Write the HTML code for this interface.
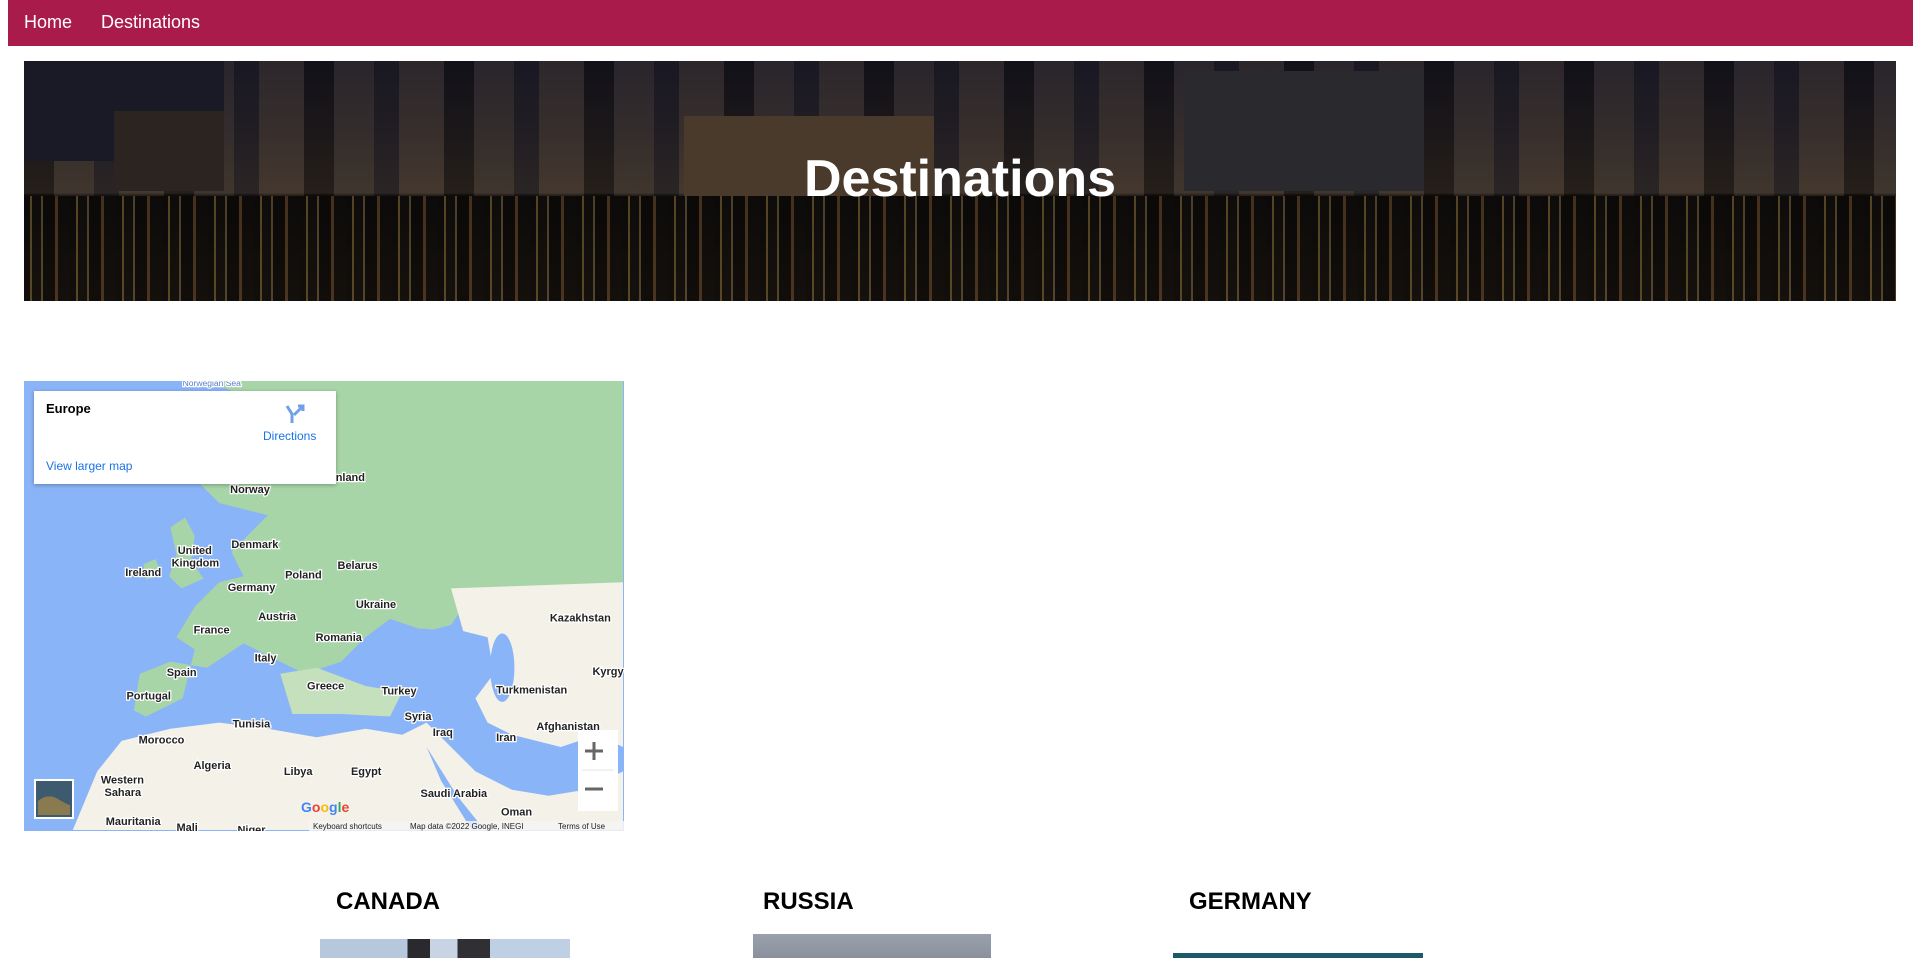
<!DOCTYPE html>
<html><head><meta charset="utf-8"><style>
*{margin:0;padding:0;box-sizing:border-box}
body{width:1913px;height:958px;overflow:hidden;background:#fff;font-family:"Liberation Sans",Arial,sans-serif;position:relative}
.nav{position:absolute;left:8px;top:0;width:1905px;height:46px;background:#a91b4b}
.nav a{position:absolute;top:12px;color:#fff;font-size:18px;text-decoration:none}
.banner{position:absolute;left:24px;top:61px;width:1872px;height:240px;overflow:hidden;
background:linear-gradient(#1c1a26 0%,#2a2426 30%,#3a3028 55%,#14110f 56%,#1e1812 100%)}
.sky{position:absolute;left:0;top:0;width:100%;height:135px;
background:repeating-linear-gradient(90deg,rgba(0,0,0,.35) 0 30px,rgba(80,70,60,.25) 30px 70px,rgba(20,20,30,.4) 70px 95px,rgba(110,90,70,.2) 95px 140px)}
.bld{position:absolute;background:rgba(0,0,0,.2)}
.water{position:absolute;left:0;top:135px;width:100%;height:105px;
background:repeating-linear-gradient(90deg,rgba(0,0,0,.4) 0 6px,rgba(200,160,70,.35) 6px 8px,rgba(0,0,0,.3) 8px 17px,rgba(240,200,120,.25) 17px 19px,rgba(0,0,0,.45) 19px 31px,rgba(180,120,60,.3) 31px 34px,rgba(0,0,0,.35) 34px 46px)}
.banner h1{position:absolute;left:0;width:100%;top:88px;text-align:center;color:#fff;font-size:52px;font-weight:bold}
.map{position:absolute;left:24px;top:381px;width:600px;height:450px;overflow:hidden;background:#8ab4f8}
.map svg{position:absolute;left:0;top:0}
.lbl{font-family:"Liberation Sans",sans-serif;font-size:9px;font-weight:bold;fill:#222;stroke:#fff;stroke-width:2px;paint-order:stroke}
.card{position:absolute;left:10px;top:10px;width:302px;height:93px;background:#fff;box-shadow:0 1px 4px rgba(0,0,0,.3)}
.h2{position:absolute;top:888px;font-size:24px;font-weight:bold;color:#000}
.img{position:absolute}
</style></head><body>
<div class="nav"><a style="left:16px">Home</a><a style="left:93px">Destinations</a></div>
<div class="banner">
<div class="sky"></div>
<div class="bld" style="left:0;top:0;width:200px;height:100px;background:#1a1a26"></div>
<div class="bld" style="left:90px;top:50px;width:110px;height:80px;background:#2c2420"></div>
<div class="bld" style="left:660px;top:55px;width:250px;height:80px;background:#4a3a2c"></div>
<div class="bld" style="left:1160px;top:10px;width:240px;height:120px;background:#2a2a2e"></div>
<div class="water"></div>
<h1>Destinations</h1>
</div>
<div class="map">
<svg width="600" height="450" viewBox="0 0 600 450">
<g transform="scale(1.22)">
<path d="M150 0H491V170L420 175 370 170 350 200 330 205 300 195 280 210 260 230 230 240 200 225 180 215 150 235 120 230 95 240 90 270 100 275 130 260 140 220 125 210 140 185 160 165 180 160 170 140 200 110 160 100 140 80 150 60 180 40 200 20Z" fill="#a8d5a8"/>
<path d="M120 120l12-8 8 15-3 20 10 15-18 8-10-10 6-18z" fill="#a8d5a8"/>
<path d="M98 150l10-4 4 12-12 5z" fill="#a8d5a8"/>
<path d="M210 240l30-5 40 15 30 5-10 20-40-2-40 0z" fill="#c4e0bc"/>
<path d="M350 170L491 165V300L470 290 440 300 400 290 380 280 370 260 385 240 380 210 360 205Z" fill="#f4f1e8"/>
<ellipse cx="392" cy="235" rx="10" ry="28" fill="#8ab4f8"/>
<ellipse cx="325" cy="215" rx="28" ry="12" fill="#8ab4f8"/>
<path d="M40 368L60 320 80 295 120 285 160 280 200 285 240 292 280 285 310 290 330 280 350 300 370 320 400 335 430 340 460 335 491 320V368Z" fill="#f4f1e8"/>
<path d="M330 300l25 40 20 25-8 3-25-40z" fill="#8ab4f8"/>
<text class="lbl" x="130" y="4" style="font-size:7px;font-weight:normal;fill:#5a7ec6">Norwegian Sea</text>
<text class="lbl" x="169" y="92">Norway</text>
<text class="lbl" x="253" y="82">inland</text>
<text class="lbl" x="126" y="142">United</text>
<text class="lbl" x="121" y="152">Kingdom</text>
<text class="lbl" x="170" y="137">Denmark</text>
<text class="lbl" x="83" y="160">Ireland</text>
<text class="lbl" x="257" y="154">Belarus</text>
<text class="lbl" x="214" y="162">Poland</text>
<text class="lbl" x="167" y="172">Germany</text>
<text class="lbl" x="272" y="186">Ukraine</text>
<text class="lbl" x="192" y="196">Austria</text>
<text class="lbl" x="139" y="207">France</text>
<text class="lbl" x="239" y="213">Romania</text>
<text class="lbl" x="431" y="197">Kazakhstan</text>
<text class="lbl" x="189" y="230">Italy</text>
<text class="lbl" x="117" y="242">Spain</text>
<text class="lbl" x="232" y="253">Greece</text>
<text class="lbl" x="293" y="257">Turkey</text>
<text class="lbl" x="466" y="241">Kyrgy</text>
<text class="lbl" x="387" y="256">Turkmenistan</text>
<text class="lbl" x="84" y="261">Portugal</text>
<text class="lbl" x="312" y="278">Syria</text>
<text class="lbl" x="171" y="284">Tunisia</text>
<text class="lbl" x="335" y="291">Iraq</text>
<text class="lbl" x="387" y="295">Iran</text>
<text class="lbl" x="420" y="286">Afghanistan</text>
<text class="lbl" x="94" y="297">Morocco</text>
<text class="lbl" x="139" y="318">Algeria</text>
<text class="lbl" x="213" y="323">Libya</text>
<text class="lbl" x="268" y="323">Egypt</text>
<text class="lbl" x="63" y="330">Western</text>
<text class="lbl" x="66" y="340">Sahara</text>
<text class="lbl" x="325" y="341">Saudi Arabia</text>
<text class="lbl" x="391" y="356">Oman</text>
<text class="lbl" x="67" y="364">Mauritania</text>
<text class="lbl" x="125" y="369">Mali</text>
<text class="lbl" x="175" y="371">Niger</text>
</g>
<rect x="285" y="440" width="315" height="10" fill="rgba(245,245,245,.85)"/>
<text x="289" y="448" style="font-size:8px;fill:#222">Keyboard shortcuts</text>
<text x="386" y="448" style="font-size:8px;fill:#222">Map data ©2022 Google, INEGI</text>
<text x="534" y="448" style="font-size:8px;fill:#222">Terms of Use</text>
<text x="277" y="431" style="font-size:14px;font-weight:bold;fill:#4285f4">G<tspan fill="#ea4335">o</tspan><tspan fill="#fbbc05">o</tspan><tspan fill="#4285f4">g</tspan><tspan fill="#34a853">l</tspan><tspan fill="#ea4335">e</tspan></text>
<rect x="554" y="349" width="40" height="81" fill="#fff"/>
<line x1="558" y1="389" x2="590" y2="389" stroke="#e6e6e6"/>
<path d="M570 361v18M561 370h18" stroke="#666" stroke-width="3"/>
<path d="M561 408h18" stroke="#666" stroke-width="3"/>
<rect x="10" y="398" width="40" height="40" fill="#fff"/>
<rect x="12" y="400" width="36" height="36" fill="#3d5a6e"/>
<path d="M14 420q10-8 20-2t12 6v10H14z" fill="#8a7a50"/>
</svg>
<div class="card">
<div style="position:absolute;left:12px;top:10px;font-size:13px;font-weight:bold;color:#000">Europe</div>
<svg style="position:absolute;left:249px;top:12px" width="22" height="22" viewBox="0 0 22 22"><path d="M4 3l5 8v9M15 3h5v5M19 4l-8 8" stroke="#6fa0e8" stroke-width="3" fill="none"/></svg>
<div style="position:absolute;left:229px;top:38px;font-size:12px;color:#1a73e8">Directions</div>
<div style="position:absolute;left:12px;top:68px;font-size:12px;color:#1a73e8">View larger map</div>
</div>
</div>
<div class="h2" style="left:336px">CANADA</div>
<div class="h2" style="left:763px">RUSSIA</div>
<div class="h2" style="left:1189px">GERMANY</div>
<div class="img" style="left:320px;top:939px;width:250px;height:19px;background:linear-gradient(90deg,#b8c8dc 0 35%,#2a2a2e 35% 44%,#c8d4e4 44% 55%,#303034 55% 68%,#c0d0e4 68%)"></div>
<div class="img" style="left:753px;top:934px;width:238px;height:24px;background:linear-gradient(#9aa0ac,#8a909c)"></div>
<div class="img" style="left:1173px;top:953px;width:250px;height:5px;background:#1e5a66"></div>
</body></html>
